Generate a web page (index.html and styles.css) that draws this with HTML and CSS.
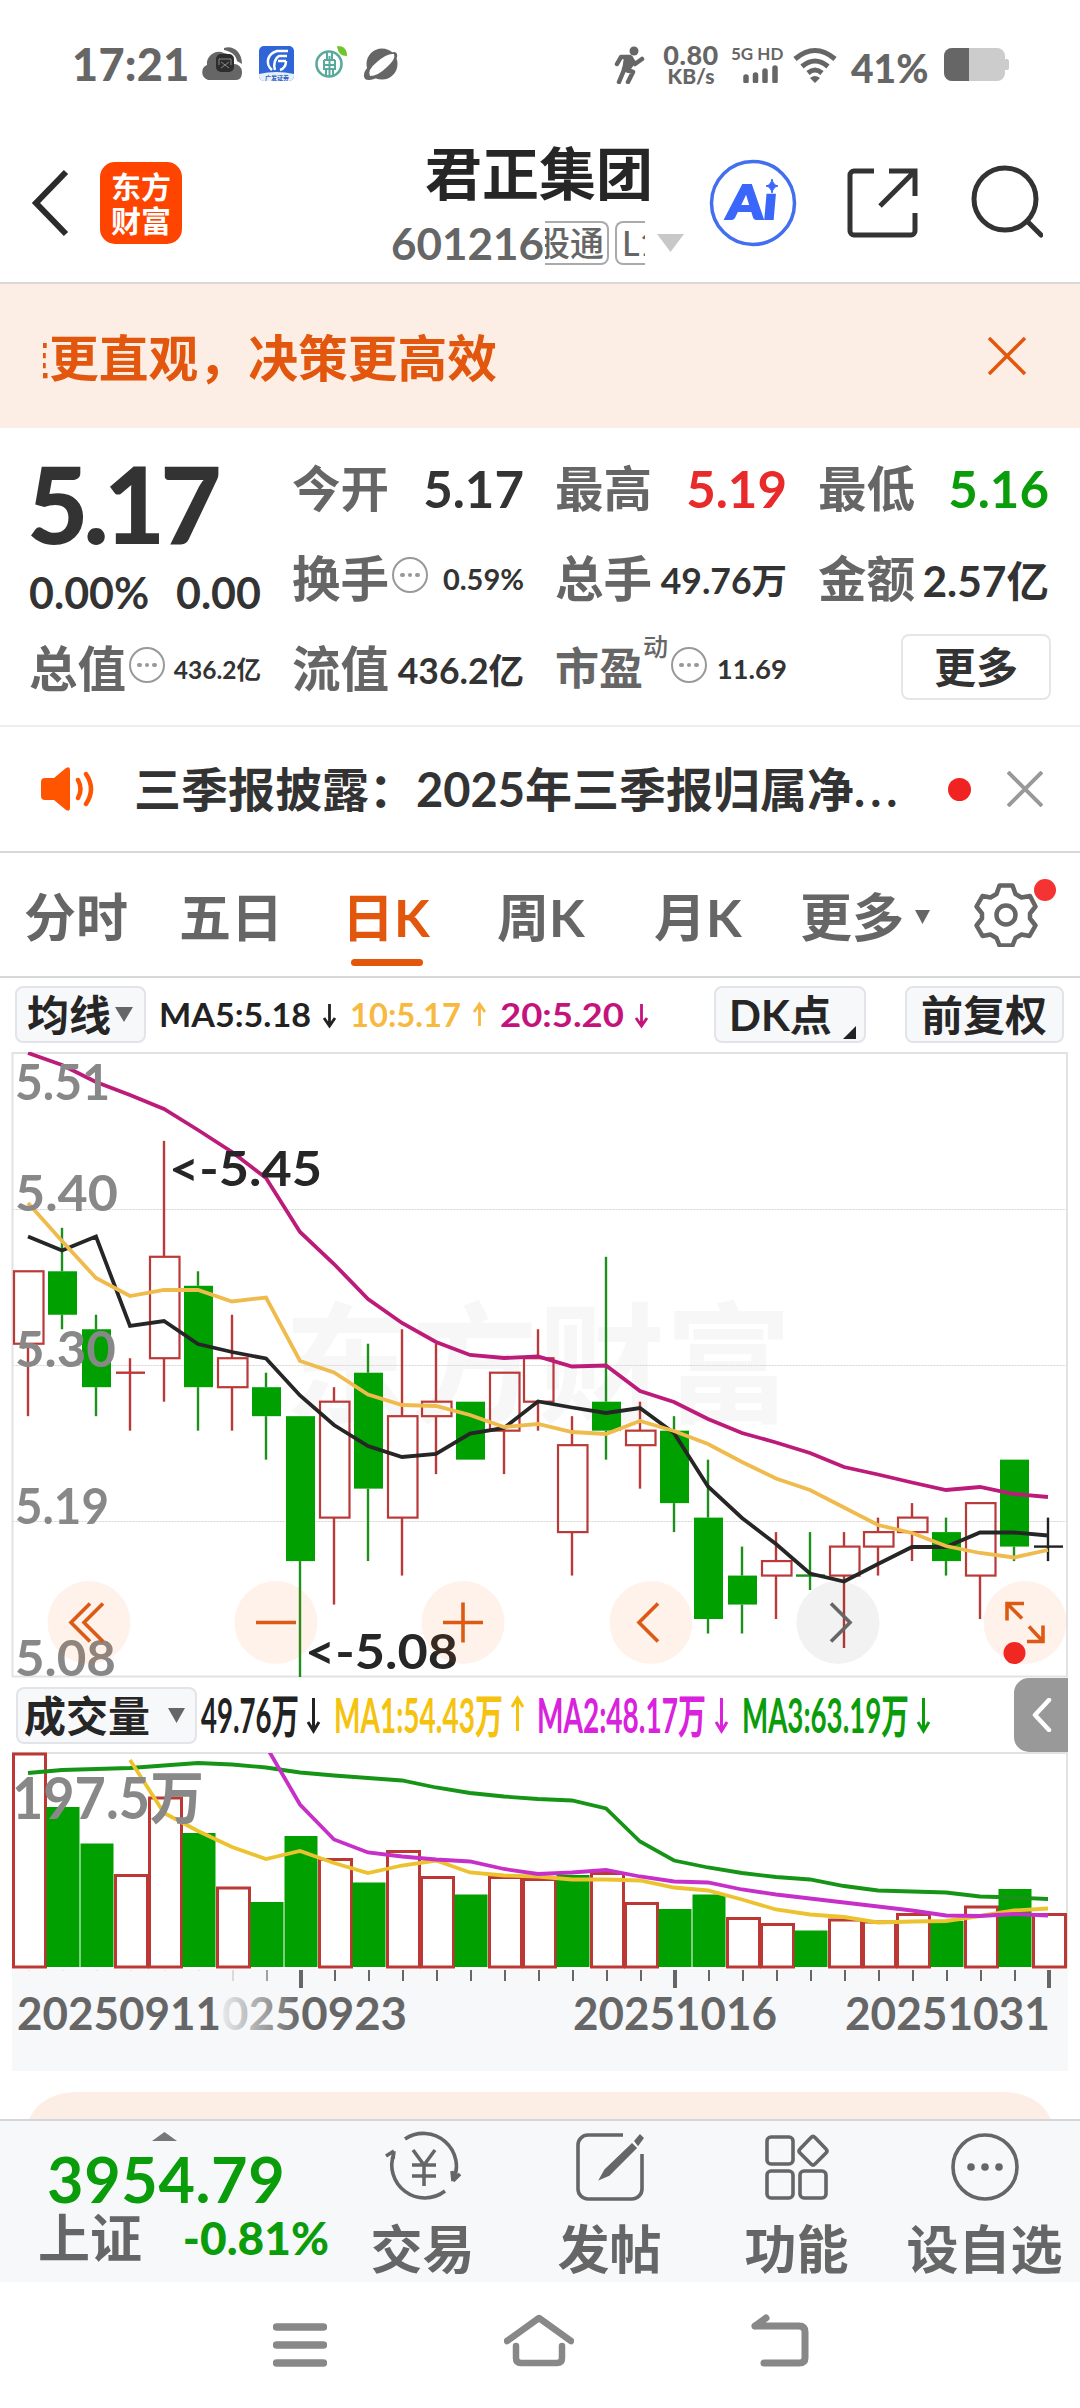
FILE: index.html
```html
<!DOCTYPE html>
<html lang="zh-CN">
  <head>
    <meta charset="UTF-8" />
    <meta name="viewport" content="width=device-width, initial-scale=1.0" />
    <title>君正集团 601216</title>
    <link rel="stylesheet" href="styles.css">
  </head>
  <body>
    <div class="status-bar">
      <div class="status-left">
        <span class="clock">17:21</span>
        <svg class="status-apps" width="200" height="40" viewBox="0 0 200 40">
          <path d="M8 34a8 8 0 0 1-1-15 12 12 0 0 1 17-12 11 11 0 0 1 10 11 8 8 0 0 1 8 8c0 5-2 8-6 8z" fill="#666" />
          <path d="M24 2c9-3 18 4 18 16l-5-3c-1-6-5-9-13-11z" fill="#666" />
          <rect x="16" y="8" width="18" height="18" rx="5" fill="#2d2d2d" />
          <path d="M19 19v-6h12v6M21 22l8-6M29 22l-8-6" stroke="#888" fill="none" />
          <rect x="59" y="0" width="35" height="35" rx="5" fill="#2f65d6" />
          <path d="M59 28q17-4 35 0v2a5 5 0 0 1-5 5H64a5 5 0 0 1-5-5z" fill="#e8effc" />
          <path d="M88 5H77c-10 3-12 13-5 19M87 10h-8c-4 2-6 9-4 14M86 15h-8M86 15q0 7-6 9" stroke="#fff" stroke-width="2.5" fill="none" />
          <text x="65" y="33.5" font-size="6" textLength="24" fill="#2f5fc0">广发证券</text>
          <circle cx="129" cy="18" r="12.5" fill="none" stroke="#58aa9c" stroke-width="2.6" />
          <path d="M127 5v9M132 5v9M124 14h11M124 19h11M124 14v9h11v-9M129.500 10v21M126 23v8M133 23v8" stroke="#58aa9c" stroke-width="2" fill="none" />
          <path d="M137 0c7 0 10 3 10 10-6 0-9-3-10-10z" fill="#6ec52c" />
          <circle cx="182" cy="18" r="15.500" fill="#666" />
          <path d="M165 33q-4-7 6-14 13-13 24-13 5 2-1 11-9 12-20 16-6 2-9 0z" fill="#666" />
          <path d="M170 30q-3-6 7-14 10-9 17-8 2 5-7 13-9 9-17 9z" fill="#fff" />
        </svg>
      </div>
      <div class="status-right">
        <svg width="32" height="38" viewBox="0 0 32 38">
          <circle cx="20" cy="5" r="4.500" fill="#666" />
          <path d="M3 18l4-7h9l5 7 7-5M17 12l-7 11 9 3-5 10M10 24l-5 12" fill="none" stroke="#666" stroke-width="4.500" stroke-linecap="round" stroke-linejoin="round" />
          <path d="M10 11h8l2 8-6 8-6-3z" fill="#666" />
        </svg>
        <div class="net-speed"><b>0.80</b><span>KB/s</span></div>
        <div class="signal">
          <span>5G HD</span>
          <svg width="48" height="18" viewBox="0 0 48 18">
            <path d="M15 16v-4M24.500 16v-6M34 16V6M44 16V3" stroke="#666" stroke-width="5.500" stroke-linecap="round" />
          </svg>
        </div>
        <svg class="wifi" width="44" height="36" viewBox="0 0 44 36">
          <path d="M2 12q20-17 40 0M9 19.500q13-11 26 0M15 26q7-6 14 0" fill="none" stroke="#666" stroke-width="5" />
          <path d="M17 31q5-4 10 0l-5 5z" fill="#666" />
        </svg>
        <span class="battery-text">41%</span>
        <svg width="66" height="34" viewBox="0 0 66 34">
          <rect x="0" y="0" width="61" height="33" rx="8" fill="#ccc" />
          <rect x="60" y="11" width="5" height="11" rx="2" fill="#ccc" />
          <path d="M8 0h17v33H8a8 8 0 0 1-8-8V8a8 8 0 0 1 8-8z" fill="#666" />
        </svg>
      </div>
    </div>

    <div class="header">
      <svg class="back" width="40" height="68" viewBox="0 0 40 68">
        <path d="M35 3L5 34l30 31" fill="none" stroke="#2b2b2b" stroke-width="6" />
      </svg>
      <div class="logo"><span>东方</span><span>财富</span></div>
      <div class="stock">
        <h1>君正集团</h1>
        <div class="code-row">
          <span class="code">601216</span>
          <span class="tag tag-left"><i>股通</i></span>
          <span class="tag tag-right"><i>L1</i></span>
          <svg class="down" width="28" height="18" viewBox="0 0 28 18"><path d="M0 0h27L13.500 18z" fill="#c8c8c8" /></svg>
        </div>
      </div>
      <svg class="ai" width="88" height="88" viewBox="0 0 88 88">
        <circle cx="44" cy="44" r="41.500" fill="none" stroke="#426ff0" stroke-width="3.500" />
        <path d="M63 20q1 6 6 7-5 1-6 7-1-6-6-7 5-1 6-7z" fill="#3a66fb" stroke="#3a66fb" />
        <text x="17" y="60" font-size="47" font-weight="900" textLength="50" lengthAdjust="spacingAndGlyphs" fill="#3a66fb" stroke="#3a66fb" stroke-width="2" transform="skewX(-5) translate(5 0)">Aı</text>
      </svg>
      <svg class="share" width="72" height="72" viewBox="0 0 72 72">
        <path d="M27 4H7a4 4 0 0 0-4 4v56a4 4 0 0 0 4 4h57a4 4 0 0 0 4-4V46M42 4h26v25M68 4L33 39" fill="none" stroke="#333" stroke-width="5" />
      </svg>
      <svg class="search" width="72" height="74" viewBox="0 0 72 74">
        <circle cx="34" cy="34" r="31" fill="none" stroke="#333" stroke-width="5" />
        <path d="M56 56l14 14" stroke="#333" stroke-width="5" stroke-linecap="round" />
      </svg>
    </div>

    <div class="banner">
      <div class="marquee"><span class="cut">准</span>更直观，决策更高效</div>
      <svg width="40" height="40" viewBox="0 0 40 40"><path d="M2 2l36 36M38 2L2 38" stroke="#e2570d" stroke-width="3.500" /></svg>
    </div>

    <div class="quote">
      <div class="price-cell">
        <div class="price">5.17</div>
        <div class="change"><span>0.00%</span><span>0.00</span></div>
      </div>
      <div class="item"><span class="label">今开</span><span class="value v-xl">5.17</span></div>
      <div class="item"><span class="label">最高</span><span class="value v-xl red">5.19</span></div>
      <div class="item"><span class="label">最低</span><span class="value v-xl green">5.16</span></div>
      <div class="item"><span class="label">换手</span><span class="dots"><i></i><i></i><i></i></span><span class="value v-s">0.59%</span></div>
      <div class="item"><span class="label">总手</span><span class="value v-m">49.76万</span></div>
      <div class="item"><span class="label">金额</span><span class="value v-l">2.57亿</span></div>
      <div class="item"><span class="label">总值</span><span class="dots"><i></i><i></i><i></i></span><span class="value v-xs">436.2亿</span></div>
      <div class="item"><span class="label">流值</span><span class="value v-m">436.2亿</span></div>
      <div class="item"><span class="label label-pe">市盈</span><sup>动</sup><span class="dots"><i></i><i></i><i></i></span><span class="value v-pe">11.69</span></div>
      <div class="item item-more"><button class="more-btn">更多</button></div>
    </div>

    <div class="news">
      <svg class="horn" width="54" height="44" viewBox="0 0 54 44">
        <path d="M4 11h9L25 1q4-2 4 2v38q0 4-4 2L13 33H4q-4 0-4-4V15q0-4 4-4z" fill="#ff5500" />
        <path d="M37 13q5 9 0 18M45 7q10 15 0 30" fill="none" stroke="#ff5500" stroke-width="4.500" stroke-linecap="round" />
      </svg>
      <p>三季报披露：2025年三季报归属净<span>...</span></p>
      <span class="news-dot"></span>
      <svg width="36" height="36" viewBox="0 0 36 36"><path d="M1 1l34 34M35 1L1 35" stroke="#999" stroke-width="4" /></svg>
    </div>

    <div class="tabs">
      <span>分时</span>
      <span>五日</span>
      <span class="active">日K</span>
      <span>周K</span>
      <span>月K</span>
      <span class="tab-more">更多<svg width="15" height="14" viewBox="0 0 15 14"><path d="M0 0h15L7.500 14z" fill="#666" /></svg></span>
      <div class="gear">
        <svg width="64" height="64" viewBox="0 0 64 64">
          <path d="M25.500 2.500h13l3 8.500 6 3.500 8.500-1.500 5.500 10.500-5.500 7v5l5.500 7-6 10.500-8-1.500-6 3.500-3 7.500h-13l-3-7.500-6-3.500-8 1.500-6-10.500 5.500-7v-5l-5.500-7 6-10.500 8 1.500 6-3.500z" fill="none" stroke="#666" stroke-width="4.500" stroke-linejoin="round" />
          <circle cx="32" cy="32" r="9.500" fill="none" stroke="#666" stroke-width="4.500" />
        </svg>
        <i></i>
      </div>
    </div>

    <div class="ma-bar">
      <button class="chip">均线<svg width="18" height="15" viewBox="0 0 18 15"><path d="M0 0h18L9 15z" fill="#666" /></svg></button>
      <svg class="ma-legend" width="500" height="60" viewBox="150 0 500 60">
        <g font-size="33" font-weight="700">
          <text x="160" y="41" textLength="152" lengthAdjust="spacingAndGlyphs" fill="#222">MA5:5.18</text>
          <text x="351" y="41" textLength="111" lengthAdjust="spacingAndGlyphs" fill="#f7b940">10:5.17</text>
          <text x="501" y="41" textLength="124" lengthAdjust="spacingAndGlyphs" fill="#c4137c">20:5.20</text>
        </g>
        <g fill="none" stroke-width="2.800">
          <path d="M330.500 18v22M325 32l5.500 8 5.500-8" stroke="#222" />
          <path d="M480.500 40V18M475 26l5.500-8 5.500 8" stroke="#f7b940" />
          <path d="M642.500 18v22M637 32l5.500 8 5.500-8" stroke="#c4137c" />
        </g>
      </svg>
      <button class="chip chip-dk">DK点<svg width="14" height="14" viewBox="0 0 14 14"><path d="M14 0v13H1z" fill="#222" /></svg></button>
      <button class="chip chip-right">前复权</button>
    </div>

    <svg id="kline" class="chart" width="1080" height="626" viewBox="0 1052 1080 626"></svg>

    <div class="vol-bar">
      <button class="chip chip-vol">成交量<svg width="17" height="15" viewBox="0 0 17 15"><path d="M0 0h17L8.500 15z" fill="#666" /></svg></button>
      <svg class="vol-legend" width="790" height="74" viewBox="200 0 790 74">
        <g font-size="47" font-weight="700">
          <text x="201" y="55" textLength="98" lengthAdjust="spacingAndGlyphs" fill="#222">49.76万</text>
          <text x="334" y="55" textLength="169" lengthAdjust="spacingAndGlyphs" fill="#f5c30f">MA1:54.43万</text>
          <text x="537" y="55" textLength="169" lengthAdjust="spacingAndGlyphs" fill="#d922dc">MA2:48.17万</text>
          <text x="742" y="55" textLength="167" lengthAdjust="spacingAndGlyphs" fill="#0a9c0a">MA3:63.19万</text>
        </g>
        <g fill="none" stroke-width="3">
          <path d="M313.500 20v33M308 44l5.500 9 5.500-9" stroke="#222" />
          <path d="M517.500 53V20M512 29l5.500-9 5.500 9" stroke="#f5c30f" />
          <path d="M721.500 20v33M716 44l5.500 9 5.500-9" stroke="#d922dc" />
          <path d="M923.500 20v33M918 44l5.500 9 5.500-9" stroke="#0a9c0a" />
        </g>
      </svg>
      <div class="side-btn">
        <svg width="20" height="34" viewBox="0 0 20 34"><path d="M17 2L3 17l14 15" fill="none" stroke="#fff" stroke-width="4.500" stroke-linecap="round" stroke-linejoin="round" /></svg>
      </div>
    </div>

    <svg id="volume" class="chart" width="1080" height="319" viewBox="0 1752 1080 319"></svg>

    <div class="card-wrap"><div class="card"></div></div>

    <div class="bottom-bar">
      <div class="index">
        <svg width="25" height="9" viewBox="0 0 25 9"><path d="M12.500 0L25 9H0z" fill="#777" /></svg>
        <div class="index-value">3954.79</div>
        <div class="index-row"><span>上证</span><b>-0.81%</b></div>
      </div>
      <div class="action">
        <svg width="80" height="72" viewBox="0 0 80 72">
          <path d="M22 8A33 33 0 0 1 70 50M70 50l-1-10M70 50l7-7M62 60A33 33 0 0 1 11 22M11 20l-8 5M11 20l-1 8" fill="none" stroke="#666" stroke-width="3.600" />
          <path d="M30 19l11 15 11-15M41 34v21M29 34h24M29 45h24" fill="none" stroke="#666" stroke-width="3.500" />
        </svg>
        <span>交易</span>
      </div>
      <div class="action">
        <svg width="72" height="72" viewBox="0 0 72 72">
          <path d="M49 4H14A10 10 0 0 0 4 14v44a10 10 0 0 0 10 10h44a10 10 0 0 0 10-10V23" fill="none" stroke="#666" stroke-width="3.600" />
          <path d="M58 13L31 39l-5 9 9-4 27-27zM61 10l5-6 3 3-5 7z" fill="#666" stroke="#666" stroke-width="1.500" />
        </svg>
        <span>发帖</span>
      </div>
      <div class="action">
        <svg width="66" height="72" viewBox="0 0 66 72">
          <g fill="none" stroke="#666" stroke-width="3.600">
            <rect x="3" y="6" width="26" height="27" rx="4" />
            <rect x="3" y="40" width="26" height="27" rx="4" />
            <rect x="36" y="40" width="26" height="27" rx="4" />
            <path d="M47 6.500q2-2 4 0l11 11.500q2 2 0 4L51 33q-2 2-4 0L36 22q-2-2 0-4z" />
          </g>
        </svg>
        <span>功能</span>
      </div>
      <div class="action action-last">
        <svg width="70" height="72" viewBox="0 0 70 72">
          <circle cx="35" cy="36" r="32" fill="none" stroke="#666" stroke-width="3.600" />
          <g fill="#666"><circle cx="21" cy="36" r="3.800" /><circle cx="35" cy="36" r="3.800" /><circle cx="49" cy="36" r="3.800" /></g>
        </svg>
        <span>设自选</span>
      </div>
    </div>

    <div class="nav-bar">
      <svg class="menu" width="54" height="52" viewBox="0 0 54 52"><path d="M3.500 7h47M3.500 25h47M3.500 43h47" stroke="#888" stroke-width="7.500" stroke-linecap="round" /></svg>
      <svg width="70" height="54" viewBox="0 0 70 54">
        <path d="M3 27L35 4l32 23M12 32v12q0 5 5 5h36q5 0 5-5V32" fill="none" stroke="#888" stroke-width="6.500" stroke-linecap="round" stroke-linejoin="round" />
      </svg>
      <svg width="60" height="54" viewBox="0 0 60 54">
        <path d="M5 12h44q6 0 6 6v26q0 5-6 5H14M5 12l11-8" fill="none" stroke="#888" stroke-width="7" stroke-linecap="round" stroke-linejoin="round" />
      </svg>
    </div>

    <script src="script.js"></script>
  </body>
</html>
```

FILE: styles.css
```css
* {
  box-sizing: border-box;
}

body {
  margin: 0;
  width: 1080px;
  background: #fff;
  font-family: Lato, "Noto Sans CJK SC", sans-serif;
  font-weight: 700;
  color: #333;
}

svg {
  display: block;
  flex-shrink: 0;
}

i {
  font-style: normal;
}

button {
  font-family: inherit;
  font-weight: inherit;
}

/* status bar */
.status-bar {
  height: 127px;
  padding: 0 70px 0 72px;
  display: flex;
  justify-content: space-between;
  align-items: center;
  color: #666;
}

.status-left,
.status-right {
  display: flex;
  align-items: center;
}

.clock {
  width: 128px;
  font-size: 45px;
  font-weight: 900;
  letter-spacing: 0.3px;
}

.status-apps {
  margin-top: 5px;
}

.status-right {
  padding-top: 2px;
}

.net-speed {
  width: 62px;
  margin-left: 14px;
  display: flex;
  flex-direction: column;
  align-items: center;
  font-size: 21px;
  line-height: 20px;
  font-weight: 900;
}

.net-speed b {
  font-size: 27px;
  line-height: 22px;
  font-weight: 900;
  letter-spacing: 0.5px;
}

.signal {
  width: 48px;
  margin-left: 9px;
  font-size: 17px;
  line-height: 14px;
  white-space: nowrap;
}

.signal svg {
  margin-top: 4px;
}

.wifi {
  margin-left: 14px;
}

.battery-text {
  width: 106px;
  padding: 6px 0 0 14px;
  margin-right: 1px;
  font-size: 39px;
  line-height: 38px;
  font-weight: 900;
}

/* header */
.header {
  height: 157px;
  border-bottom: 2px solid #d8d8d8;
  display: flex;
  align-items: flex-start;
}

.back {
  margin: 42px 0 0 31px;
}

.logo {
  width: 82px;
  height: 82px;
  margin: 35px 0 0 29px;
  padding-top: 7px;
  border-radius: 15px;
  background: #ff4400;
  color: #fff;
  display: flex;
  flex-direction: column;
  align-items: center;
  font-size: 30px;
  line-height: 34px;
}

.stock {
  width: 320px;
  margin: 11px 0 0 201px;
}

h1 {
  margin: 0;
  padding-right: 8px;
  font-size: 57px;
  line-height: 70px;
  font-weight: 700;
  text-align: center;
  color: #262626;
}

.code-row {
  height: 46px;
  margin-left: 8px;
  margin-top: 12px;
  display: flex;
  align-items: center;
  color: #666;
}

.code {
  width: 154px;
  flex-shrink: 0;
  font-size: 44px;
  line-height: 46px;
}

.tag {
  height: 44px;
  flex-shrink: 0;
  overflow: hidden;
  border: 2px solid #aaa;
  font-size: 34px;
  line-height: 39px;
  font-weight: 500;
  white-space: nowrap;
  display: flex;
}

.tag-left {
  width: 64px;
  border-left: none;
  border-radius: 0 8px 8px 0;
  justify-content: flex-end;
  padding-right: 3px;
}

.tag-right {
  width: 30px;
  margin-left: 6px;
  padding-left: 5px;
  border-right: none;
  border-radius: 8px 0 0 8px;
}

.down {
  margin-left: 12px;
}

.ai {
  margin: 32px 0 0 6px;
}

.share {
  margin: 40px 0 0 50px;
}

.search {
  margin: 38px 0 0 52px;
}

/* banner */
.banner {
  height: 144px;
  padding: 0 53px 0 43px;
  background: #fceee4;
  display: flex;
  justify-content: space-between;
  align-items: center;
  color: #e2570d;
}

.marquee {
  display: flex;
  width: 700px;
  overflow: hidden;
  font-size: 49.8px;
  line-height: 60px;
  padding-top: 4px;
}

.cut {
  width: 6px;
  overflow: hidden;
  display: flex;
  justify-content: flex-end;
}

/* quote */
.quote {
  height: 299px;
  padding: 15px 30px 0 29px;
  border-bottom: 2px solid #eee;
  display: grid;
  grid-template-columns: repeat(3, 232px) 231px;
  grid-template-rows: repeat(3, 90px);
  column-gap: 31px;
}

.price-cell {
  grid-row: span 2;
}

.price {
  height: 124px;
  margin-left: -2px;
  font-size: 106px;
  line-height: 120px;
  font-weight: 900;
  letter-spacing: -5px;
}

.change {
  display: flex;
  justify-content: space-between;
  font-size: 43px;
  line-height: 52px;
  white-space: nowrap;
}

.item {
  display: flex;
  align-items: center;
}

.label {
  font-size: 48.5px;
  line-height: 60px;
  color: #666;
  white-space: nowrap;
}

.label-pe {
  font-size: 44px;
}

.value {
  margin-left: auto;
  white-space: nowrap;
}

.v-xl {
  font-size: 51px;
}

.v-l {
  font-size: 42.5px;
}

.v-m {
  font-size: 35.5px;
}

.v-s {
  font-size: 29px;
}

.v-pe {
  font-size: 27.5px;
}

.v-xs {
  font-size: 24.5px;
}

.red {
  color: #e92a2a;
}

.green {
  color: #0a9c0a;
}

.dots {
  width: 36px;
  height: 36px;
  margin: -6px 0 0 3px;
  border: 2.5px solid #999;
  border-radius: 50%;
  display: flex;
  justify-content: center;
  align-items: center;
  gap: 3px;
}

.dots i {
  width: 4.5px;
  height: 4.5px;
  border-radius: 50%;
  background: #999;
}

sup {
  margin-top: -44px;
  font-size: 25px;
  line-height: 30px;
  font-weight: 500;
  color: #666;
  vertical-align: baseline;
}

.item-more {
  justify-content: flex-end;
}

.more-btn {
  width: 150px;
  height: 66px;
  margin-right: -2px;
  margin-top: -2px;
  border: 2px solid #e6e6e6;
  border-radius: 8px;
  background: #fff;
  font-size: 42px;
  line-height: 56px;
  color: #333;
  padding: 0;
}

/* news */
.news {
  height: 126px;
  padding: 0 37px 0 41px;
  border-bottom: 2px solid #d8d8d8;
  display: flex;
  align-items: center;
}

.news p {
  width: 790px;
  margin: 0 0 0 39px;
  font-size: 47px;
  line-height: 60px;
  white-space: nowrap;
}

.news p span {
  letter-spacing: 5px;
}

.news-dot {
  width: 23px;
  height: 23px;
  margin: 0 36px 0 24px;
  border-radius: 50%;
  background: #f02222;
}

/* period tabs */
.tabs {
  height: 125px;
  padding-left: 24px;
  border-bottom: 2px solid #d8d8d8;
  display: grid;
  grid-template-columns: 155px 163px 155px 157px 146px 174px 80px;
  align-items: center;
  font-size: 52px;
  line-height: 70px;
  color: #666;
}

.tabs span {
  padding-top: 4px;
}

.tabs .active {
  color: #e2570d;
}

.tabs .active::after {
  content: "";
  display: block;
  width: 72px;
  height: 7px;
  margin: 7px 0 -14px 9px;
  border-radius: 4px;
  background: #e2570d;
}

.tab-more {
  display: flex;
  align-items: center;
  gap: 11px;
}

.gear {
  position: relative;
}

.gear i {
  position: absolute;
  left: 60px;
  top: -4px;
  width: 22px;
  height: 22px;
  border-radius: 50%;
  background: #f53333;
}

/* indicator bars */
.ma-bar {
  height: 74px;
  padding: 8px 16px 0 15px;
  display: flex;
}

.chip {
  width: 131px;
  height: 57px;
  flex-shrink: 0;
  padding: 0 0 0 10px;
  border: 2px solid #e2e4ea;
  border-radius: 8px;
  background: #f7f8fa;
  display: flex;
  align-items: center;
  gap: 4px;
  font-size: 42px;
  line-height: 50px;
  color: #262626;
  white-space: nowrap;
}

.ma-legend {
  margin: 0 0 0 3px;
}

.chip-dk {
  width: 152px;
  margin-left: 65px;
  padding-left: 13px;
  gap: 10px;
}

.chip-dk svg {
  margin-top: 36px;
}

.chip-right {
  width: 159px;
  margin-left: 39px;
  padding-left: 14px;
}

.vol-bar {
  height: 74px;
  padding-left: 16px;
  display: flex;
}

.chip-vol {
  width: 181px;
  margin-top: 9px;
  padding-left: 6px;
  gap: 18px;
}

.vol-legend {
  margin-left: 3px;
}

.side-btn {
  width: 54px;
  height: 74px;
  margin-left: 24px;
  padding: 20px 0 0 18px;
  border-radius: 15px 0 0 15px;
  background: #999;
}

/* card under the chart, cut by the bottom bar */
.card-wrap {
  height: 48px;
  padding: 21px 28px 0;
  overflow: hidden;
}

.card {
  height: 90px;
  border-radius: 48px / 36px;
  background: #fceee4;
}

/* bottom bar */
.bottom-bar {
  height: 163px;
  border-top: 2px solid #d5d6da;
  background: #f7f8fa;
  display: flex;
}

.index {
  width: 329px;
  padding: 11px 0 0 38px;
}

.index svg {
  margin-left: 114px;
}

.index-value {
  padding-left: 9px;
  margin-top: 5px;
  font-size: 63px;
  line-height: 66px;
  letter-spacing: 0.6px;
  color: #0a9c0a;
}

.index-row {
  display: flex;
  justify-content: space-between;
  align-items: center;
  margin-top: -4px;
  font-size: 52px;
  line-height: 60px;
  color: #666;
}

.index-row b {
  font-size: 46px;
  color: #0a9c0a;
}

.action {
  width: 187px;
  padding-top: 10px;
  display: flex;
  flex-direction: column;
  align-items: center;
  font-size: 52px;
  line-height: 60px;
  color: #666;
}

.action span {
  margin-top: 16px;
  white-space: nowrap;
}

.action-last {
  width: 189px;
}

/* system navigation */
.nav-bar {
  height: 126px;
  padding: 32px 270px 0 273px;
  display: flex;
  justify-content: space-between;
}

.menu {
  margin-top: 6px;
}

.chart text {
  font-weight: 700;
}
```

FILE: script.js
```js
const LEFT = 12.5;
const RIGHT = 1067;
const STEP = 34;
const RED = "#b93a38";
const GREEN = "#00a000";

// [body top, body bottom, high, low] in ticks of 0.01 above 5.08, then colour
const candles = [
  [28, 23, 28, 18, "r"], [28, 25, 31, 24, "g"], [24, 20, 25, 18, "g"],
  [21, 21, 22, 17, "r"], [29, 22, 37, 19, "r"], [27, 20, 28, 17, "g"],
  [22, 20, 25, 17, "r"], [20, 18, 21, 15, "g"], [18, 8, 18, 0, "g"],
  [19, 11, 20, 5, "r"], [21, 13, 23, 8, "g"], [18, 11, 24, 7, "r"],
  [19, 18, 23, 14, "r"], [19, 15, 19, 15, "g"], [21, 17, 21, 14, "r"],
  [22, 19, 24, 17, "r"], [16, 10, 18, 7, "r"], [19, 17, 29, 15, "g"],
  [17, 16, 19, 13, "r"], [17, 12, 18, 10, "g"], [11, 4, 15, 3, "g"],
  [7, 5, 9, 3, "g"], [8, 7, 10, 4, "r"], [7, 7, 10, 6, "g"],
  [9, 7, 10, 2, "r"], [10, 9, 11, 7, "r"], [11, 10, 12, 8, "r"],
  [10, 8, 11, 7, "g"], [12, 7, 12, 4, "r"], [15, 9, 15, 8, "g"],
  [9, 9, 11, 8, "k"],
];

const ma5 = [1236.5, 1250.5, 1236.5, 1326, 1321, 1344, 1352, 1358.5, 1395.5, 1425, 1446, 1457, 1454, 1433.5, 1428, 1401.5, 1407.5, 1413, 1408, 1433, 1486.5, 1518, 1544, 1573.5, 1581.5, 1564, 1547, 1547, 1532.5, 1532.5, 1535.5];
const ma10 = [1203, 1241, 1278, 1296, 1290, 1290, 1301.5, 1297.5, 1361, 1372.5, 1394.5, 1405, 1406, 1415, 1427, 1424, 1432, 1434, 1421, 1431, 1444, 1462, 1478.5, 1490, 1507.5, 1525, 1533, 1546, 1553, 1557.5, 1550];
const ma20 = [1053, 1065, 1082, 1095, 1109, 1130, 1152, 1178, 1232, 1264, 1299, 1323, 1342, 1355, 1358, 1356.5, 1366.5, 1365.5, 1391, 1402, 1419, 1433, 1442.5, 1453, 1467, 1474.5, 1482.5, 1490, 1487, 1494, 1497];

const volumes = [1753, 1807, 1843.5, 1874.5, 1797, 1833, 1887, 1902, 1836, 1858.5, 1882.5, 1850.5, 1876.5, 1894.5, 1876.5, 1878.5, 1875, 1872.5, 1902.5, 1909, 1894.5, 1917.5, 1923.5, 1930.5, 1919, 1921, 1913.5, 1921, 1906, 1889, 1913.5];
const volColors = "rggrrgrggrgrrgrrgrrggrrgrrrgrgr";
const vol1 = [null, null, null, 1760, 1813, 1831, 1847, 1859, 1851, 1863, 1873, 1865.5, 1860.5, 1872.5, 1875.5, 1876.5, 1879.5, 1879.5, 1880.5, 1887.5, 1890.5, 1899.5, 1909.5, 1914.5, 1917, 1922.5, 1921.5, 1921, 1916, 1910.5, 1908.5];
const vol2 = [null, null, null, null, null, null, null, 1746, 1804.5, 1839.5, 1852.5, 1856.5, 1859.5, 1861.5, 1869, 1874, 1872.5, 1870, 1876.5, 1881.5, 1882.5, 1889.5, 1894.5, 1898.5, 1902.5, 1906.5, 1910.5, 1915.5, 1916, 1914, 1915.5];
const vol3 = [1773, 1770, 1769, 1768, 1765.5, 1763, 1764.5, 1767.5, 1772.5, 1775.5, 1778, 1780.5, 1787.5, 1793, 1796.5, 1799, 1800.5, 1808.5, 1841.5, 1860.5, 1867.5, 1873, 1877, 1879.5, 1886, 1890.5, 1891.5, 1892.5, 1896.5, 1897.5, 1899];

const cx = (i) => 28 + i * STEP;
const py = (n) => 1677 - n * 14.49;

function rect(x, y, w, h, fill, stroke, sw) {
  return `<rect x="${x}" y="${y}" width="${w}" height="${h}" fill="${fill}" stroke="${stroke || "none"}" stroke-width="${sw || 0}"/>`;
}

function line(x1, y1, x2, y2, color, w, extra) {
  return `<line x1="${x1}" y1="${y1}" x2="${x2}" y2="${y2}" stroke="${color}" stroke-width="${w}" ${extra || ""}/>`;
}

function curve(data, color) {
  const points = data.map((y, i) => (y === null ? "" : `${cx(i)},${y}`)).join(" ");
  return `<polyline points="${points.trim()}" fill="none" stroke="${color}" stroke-width="3.8"/>`;
}

function text(x, y, size, len, color, str) {
  return `<text x="${x}" y="${y}" font-size="${size}" textLength="${len}" lengthAdjust="spacingAndGlyphs" fill="${color}">${str}</text>`;
}

function circle(x, fill, icon, color) {
  return `<circle cx="${x}" cy="1622.500" r="41.500" fill="${fill}"/>` +
    `<path d="${icon}" transform="translate(${x} 1622.500)" fill="none" stroke="${color}" stroke-width="3.600"/>`;
}

function drawKline() {
  let s = text(284, 1412, 130, 508, "#f7f7f7", "东方财富");
  [1209.5, 1365.5, 1521.5].forEach((y) => {
    s += line(LEFT, y, RIGHT, y, "#d5d5d5", 1, 'stroke-dasharray="2 1"');
  });
  s += rect(LEFT, 1053, RIGHT - LEFT, 623.5, "none", "#e2e2e2", 2);

  candles.forEach(([top, bottom, high, low, c], i) => {
    const x = cx(i);
    const color = c === "r" ? RED : c === "g" ? "#1c8f1c" : "#222";
    if (high > top) s += line(x, py(high), x, py(top), color, 2.4);
    if (low < bottom) s += line(x, py(bottom), x, py(low), color, 2.4);
    if (top === bottom) {
      s += line(x - 14, py(top), x + 15, py(top), color, 2.4);
    } else if (c === "r") {
      s += rect(x - 14, py(top), 29.5, py(bottom) - py(top), "none", RED, 2.2);
    } else {
      s += rect(x - 14, py(top), 29, py(bottom) - py(top), GREEN);
    }
  });

  s += curve(ma20, "#bd1b7a") + curve(ma5, "#262626") + curve(ma10, "#f0bb4d");

  s += text(15, 1100, 49, 95, "#888", "5.51");
  s += text(15, 1211, 49, 103, "#888", "5.40");
  s += text(15, 1366.5, 49, 101, "#888", "5.30");
  s += text(15, 1523.5, 49, 94, "#888", "5.19");
  s += text(15, 1675.5, 49, 101, "#888", "5.08");
  s += text(169, 1185.5, 48, 153, "#262626", "&lt;-5.45");
  s += text(305, 1668.5, 48, 153, "#262626", "&lt;-5.08");

  const tint = "rgba(255, 85, 0, 0.08)";
  s += circle(89, tint, "M1-19L-18 0L1 19M14-19L-5 0L14 19", "#dc5a14");
  s += circle(276, tint, "M-20 0H20", "#dc5a14");
  s += circle(463, tint, "M-20 0H20M0-20V20", "#dc5a14");
  s += circle(651, tint, "M7-19L-12 0L7 19", "#dc5a14");
  s += circle(838, "rgba(0, 0, 0, 0.05)", "M-7-19L12 0L-7 19", "#666");
  s += circle(1025, tint, "M-18-2V-19H-1M-18-19L-3-4M18 3V19H2M18 19L4 4", "#dc5a14");
  s += '<circle cx="1014.500" cy="1653" r="11" fill="#f02822"/>';
  document.getElementById("kline").innerHTML = s;
}

function drawVolume() {
  let s = line(LEFT, 1753, RIGHT + 1, 1753, "#e2e2e2", 2) + line(RIGHT, 1753, RIGHT, 1967, "#e2e2e2", 2);
  s += rect(12, 1969, 1056, 102, "#f7f8fa");
  volumes.forEach((y, i) => {
    const x = 12 + i * STEP;
    if (volColors[i] === "r") {
      s += rect(x + 1.5, y + 1, 32, 1966 - y, "#fff", "#bb3835", 3);
    } else {
      s += rect(x + 0.5, y, 33, 1967 - y, GREEN);
    }
    // the first ticks fade out under the fixed start date
    const big = [8, 19, 30].includes(i);
    const opacity = i < 6 ? 0.1 : i === 6 ? 0.2 : i === 7 ? 0.6 : 1;
    s += line(x + 17, 1970, x + 17, i < 6 ? 1971 : big ? 1988 : 1981, "#666", big ? 4 : 2, `opacity="${opacity}"`);
  });
  s += `<svg x="0" y="1753" width="1080" height="215" viewBox="0 1753 1080 215">`;
  s += curve(vol3, "#169416") + curve(vol1, "#ecc22e") + curve(vol2, "#c630c9") + "</svg>";
  s += text(12, 1819, 58, 192, "#888", "197.5万");

  s += '<defs><linearGradient id="fade" gradientUnits="userSpaceOnUse" x1="222" y1="0" x2="300" y2="0">' +
    '<stop offset="0" stop-color="#666" stop-opacity="0.1"/><stop offset="1" stop-color="#666"/></linearGradient></defs>';
  s += text(17, 2030, 45, 204, "#666", "20250911");
  s += text(222, 2030, 45, 185, "url(#fade)", "0250923");
  s += text(573, 2030, 45, 204, "#666", "20251016");
  s += text(845, 2030, 45, 205, "#666", "20251031");
  document.getElementById("volume").innerHTML = s;
}

drawKline();
drawVolume();
```
